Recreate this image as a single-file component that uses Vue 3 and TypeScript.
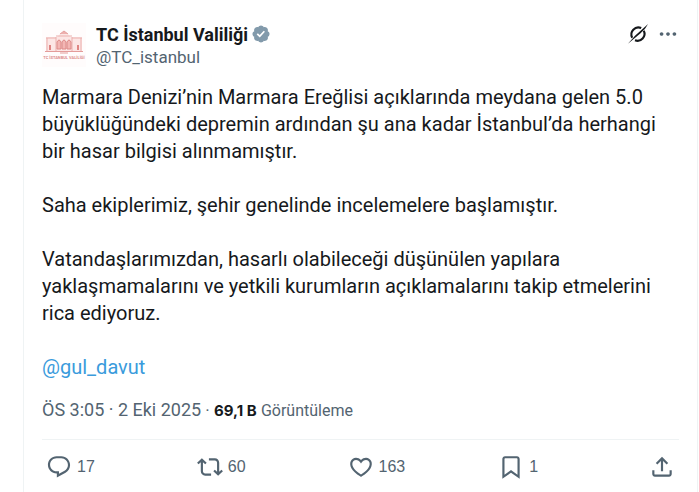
<script setup lang="ts">
interface Action {
  label: string
  count: string
  path: string
}

const paragraphs: string[][] = [
  [
    'Marmara Denizi’nin Marmara Ereğlisi açıklarında meydana gelen 5.0',
    'büyüklüğündeki depremin ardından şu ana kadar İstanbul’da herhangi',
    'bir hasar bilgisi alınmamıştır.',
  ],
  ['Saha ekiplerimiz, şehir genelinde incelemelere başlamıştır.'],
  [
    'Vatandaşlarımızdan, hasarlı olabileceği düşünülen yapılara',
    'yaklaşmamalarını ve yetkili kurumların açıklamalarını takip etmelerini',
    'rica ediyoruz.',
  ],
]

const actions: Action[] = [
  {
    label: 'Yanıtla',
    count: '17',
    path: 'M1.751 10c0-4.42 3.584-8 8.005-8h4.366c4.49 0 8.129 3.64 8.129 8.13 0 2.96-1.607 5.68-4.196 7.11l-8.054 4.46v-3.69h-.067c-4.49.1-8.183-3.51-8.183-8.01zm8.005-6c-3.317 0-6.005 2.69-6.005 6 0 3.37 2.77 6.08 6.138 6.01l.351-.01h1.761v2.3l5.087-2.81c1.951-1.08 3.163-3.13 3.163-5.36 0-3.39-2.744-6.13-6.129-6.13H9.756z',
  },
  {
    label: 'Yeniden gönder',
    count: '60',
    path: 'M4.5 3.88l4.432 4.14-1.364 1.46L5.5 7.55V16c0 1.1.896 2 2 2H13v2H7.5c-2.209 0-4-1.79-4-4V7.55L1.432 9.48.068 8.02 4.5 3.88zM16.5 6H11V4h5.5c2.209 0 4 1.79 4 4v8.45l2.068-1.93 1.364 1.46-4.432 4.14-4.432-4.14 1.364-1.46 2.068 1.93V8c0-1.1-.896-2-2-2z',
  },
  {
    label: 'Beğen',
    count: '163',
    path: 'M16.697 5.5c-1.222-.06-2.679.51-3.89 2.16l-.805 1.09-.806-1.09C9.984 6.01 8.526 5.44 7.304 5.5c-1.243.07-2.349.78-2.91 1.91-.552 1.12-.633 2.78.479 4.82 1.074 1.97 3.257 4.27 7.129 6.61 3.87-2.34 6.052-4.64 7.126-6.61 1.111-2.04 1.03-3.7.477-4.82-.561-1.13-1.666-1.84-2.908-1.91zm4.187 7.69c-1.351 2.48-4.001 5.12-8.379 7.67l-.503.3-.504-.3c-4.379-2.55-7.029-5.19-8.382-7.67-1.36-2.5-1.41-4.86-.514-6.67.887-1.79 2.647-2.91 4.601-3.01 1.651-.09 3.368.56 4.798 2.01 1.429-1.45 3.146-2.1 4.796-2.01 1.954.1 3.714 1.22 4.601 3.01.896 1.81.846 4.17-.514 6.67z',
  },
  {
    label: 'Yer işareti',
    count: '1',
    path: 'M4 4.5C4 3.12 5.119 2 6.5 2h11C18.881 2 20 3.12 20 4.5v18.44l-8-5.71-8 5.71V4.5zM6.5 4c-.276 0-.5.22-.5.5v14.56l6-4.29 6 4.29V4.5c0-.28-.224-.5-.5-.5h-11z',
  },
  {
    label: 'Paylaş',
    count: '',
    path: 'M12 2.59l5.7 5.7-1.41 1.42L13 6.41V16h-2V6.41l-3.3 3.3-1.41-1.42L12 2.59zM21 15l-.02 3.51c0 1.38-1.12 2.49-2.5 2.49H5.5C4.11 21 3 19.88 3 18.5V15h2v3.5c0 .28.22.5.5.5h12.98c.28 0 .5-.22.5-.5L19 15h2z',
  },
]
</script>

<template>
  <main class="column">
    <article class="post">
      <header class="head">
        <a class="avatar" href="#" aria-label="TC İstanbul Valiliği">
          <svg viewBox="0 0 44 44">
            <rect width="44" height="44" fill="#fffcfc" />
            <path d="M4 14h11l3-3h8l3 3h11v15H4z" fill="#fce6e5" />
            <path d="M18 11l4-3 4 3" fill="#eeb0ae" stroke="#e5a09e" />
            <path d="M14 13h16M4 15h10M30 15h10M5 15v13M39 15v13M14 14v14M30 14v14" fill="none" stroke="#ebb0ae" />
            <path d="M15 26v-7q2-4 4 0v7zM20 26v-7q2-4 4 0v7zM25 26v-7q2-4 4 0v7z" fill="#f3b6b4" stroke="#dc8a88" />
            <path d="M8 22v5M36 22v5" stroke="#df8583" stroke-width="2" />
            <path d="M3 28.500h11M30 28.500h11M14 28.500h16M18 30h8" stroke="#e39c9a" />
            <text x="22" y="36" text-anchor="middle">TC İSTANBUL VALİLİĞİ</text>
          </svg>
        </a>
        <div class="identity">
          <div class="name-row">
            <a class="name" href="#">TC İstanbul Valiliği</a>
            <svg class="badge" viewBox="0 0 22 22" role="img" aria-label="Onaylı hesap">
              <path fill="#829aab" d="M20.396 11c-.018-.646-.215-1.275-.57-1.816-.354-.54-.852-.972-1.438-1.246.223-.607.27-1.264.14-1.897-.131-.634-.437-1.218-.882-1.687-.47-.445-1.053-.75-1.687-.882-.633-.13-1.29-.083-1.897.14-.273-.587-.704-1.086-1.245-1.44S11.647 1.620 11 1.604c-.646.017-1.273.213-1.813.568s-.969.854-1.240 1.440c-.608-.223-1.267-.272-1.902-.140-.635.130-1.220.436-1.690.882-.445.470-.749 1.055-.878 1.688-.130.633-.080 1.290.144 1.896-.587.274-1.087.705-1.443 1.245-.356.540-.555 1.170-.574 1.817.020.647.218 1.276.574 1.817.356.540.856.972 1.443 1.245-.224.606-.274 1.263-.144 1.896.130.634.433 1.218.877 1.688.470.443 1.054.747 1.687.878.633.132 1.290.084 1.897-.136.274.586.705 1.084 1.246 1.439.540.354 1.170.551 1.816.569.647-.016 1.276-.213 1.817-.567s.972-.854 1.245-1.440c.604.239 1.266.296 1.903.164.636-.132 1.220-.447 1.680-.907.460-.460.776-1.044.908-1.681s.075-1.299-.165-1.903c.586-.274 1.084-.705 1.439-1.246.354-.540.551-1.170.569-1.816zM9.662 14.850l-3.429-3.428 1.293-1.302 2.072 2.072 4.400-4.794 1.347 1.246z" />
            </svg>
          </div>
          <a class="handle" href="#">@TC_istanbul</a>
        </div>
        <div class="tools">
          <button class="tool" type="button" aria-label="Grok ile açıkla">
            <svg viewBox="0 0 24 24">
              <path d="M15.500 5.500A7.600 7.600 0 0 0 5.700 16M18.300 8.500A7.600 7.600 0 0 1 8.700 18.900" fill="none" stroke="#16191c" stroke-width="2.300" />
              <path d="M23 1L9 13.500Q5 18 1 22.500L14.500 11.500Q20 7 23 1z" fill="#16191c" />
            </svg>
          </button>
          <button class="tool" type="button" aria-label="Daha fazla">
            <svg viewBox="0 0 24 24">
              <path fill="#536471" d="M3 12c0-1.100.900-2 2-2s2 .900 2 2-.900 2-2 2-2-.900-2-2zm9 2c1.100 0 2-.900 2-2s-.900-2-2-2-2 .900-2 2 .900 2 2 2zm7 0c1.100 0 2-.900 2-2s-.900-2-2-2-2 .900-2 2 .900 2 2 2z" />
            </svg>
          </button>
        </div>
      </header>

      <div class="body">
        <p v-for="(lines, i) in paragraphs" :key="i">{{ lines.join('\n') }}</p>
        <p><a class="mention" href="#">@gul_davut</a></p>
      </div>

      <div class="meta">
        <time datetime="2025-10-02T15:05">ÖS 3:05 · 2 Eki 2025</time> · <strong>69,1 B</strong> <span class="views">Görüntüleme</span>
      </div>

      <footer class="actions">
        <button v-for="action in actions" :key="action.label" class="action" type="button" :aria-label="action.label">
          <svg viewBox="0 0 24 24"><path :d="action.path" /></svg>
          <span v-if="action.count">{{ action.count }}</span>
        </button>
      </footer>
    </article>
  </main>
</template>

<style>
body {
  margin: 0;
  background: #fff;
}
</style>

<style scoped>
.column {
  box-sizing: border-box;
  min-height: 100vh;
  margin: 0 1px 0 23px;
  padding: 23px 18px 0;
  border: solid #eff3f4;
  border-width: 0 1px;
  color: #16191c;
  font-family: Roboto, "Noto Sans", sans-serif;
}
a {
  color: inherit;
  text-decoration: none;
}
button {
  padding: 0;
  border: 0;
  background: none;
  color: inherit;
  font: inherit;
  cursor: pointer;
}
svg {
  display: block;
  flex: none;
}
.head {
  display: flex;
  gap: 10px;
}
.avatar svg {
  width: 44px;
  height: 44px;
}
.avatar text {
  fill: #dd8e8c;
  font-size: 4px;
  font-weight: 700;
}
.identity {
  flex: 1;
}
.name-row {
  display: flex;
  align-items: center;
  gap: 3px;
  height: 22px;
}
.name {
  font-size: 18px;
  font-weight: 700;
}
.badge {
  width: 20px;
  height: 20px;
}
.handle {
  display: block;
  color: #536471;
  font-size: 17px;
  line-height: 24px;
}
.tools {
  display: flex;
  align-items: center;
  gap: 8px;
  height: 22px;
}
.tool svg {
  width: 22px;
  height: 22px;
}
.body {
  margin-top: 15px;
  font-size: 20px;
  line-height: 27px;
}
.body p {
  margin: 0 0 27px;
  white-space: pre-line;
}
.body p:last-child {
  margin: 0;
}
.mention {
  color: #3a9bdc;
}
.meta {
  margin-top: 17px;
  color: #536471;
  font-size: 17px;
  line-height: 24px;
}
.meta time {
  font-size: 18px;
}
.meta strong {
  color: #16191c;
  font-family: Inter, sans-serif;
  font-size: 15px;
  font-weight: 700;
}
.views {
  font-size: 16px;
}
.actions {
  display: flex;
  margin-top: 16px;
  padding: 14px 4px;
  border-top: 1px solid #eff3f4;
  color: #536471;
  font-family: "Liberation Sans", sans-serif;
  font-size: 16px;
}
.action {
  display: flex;
  flex: 1;
  align-items: center;
  gap: 5px;
}
.action:last-child {
  flex: none;
}
.action svg {
  width: 26px;
  height: 26px;
  fill: currentColor;
}
</style>
